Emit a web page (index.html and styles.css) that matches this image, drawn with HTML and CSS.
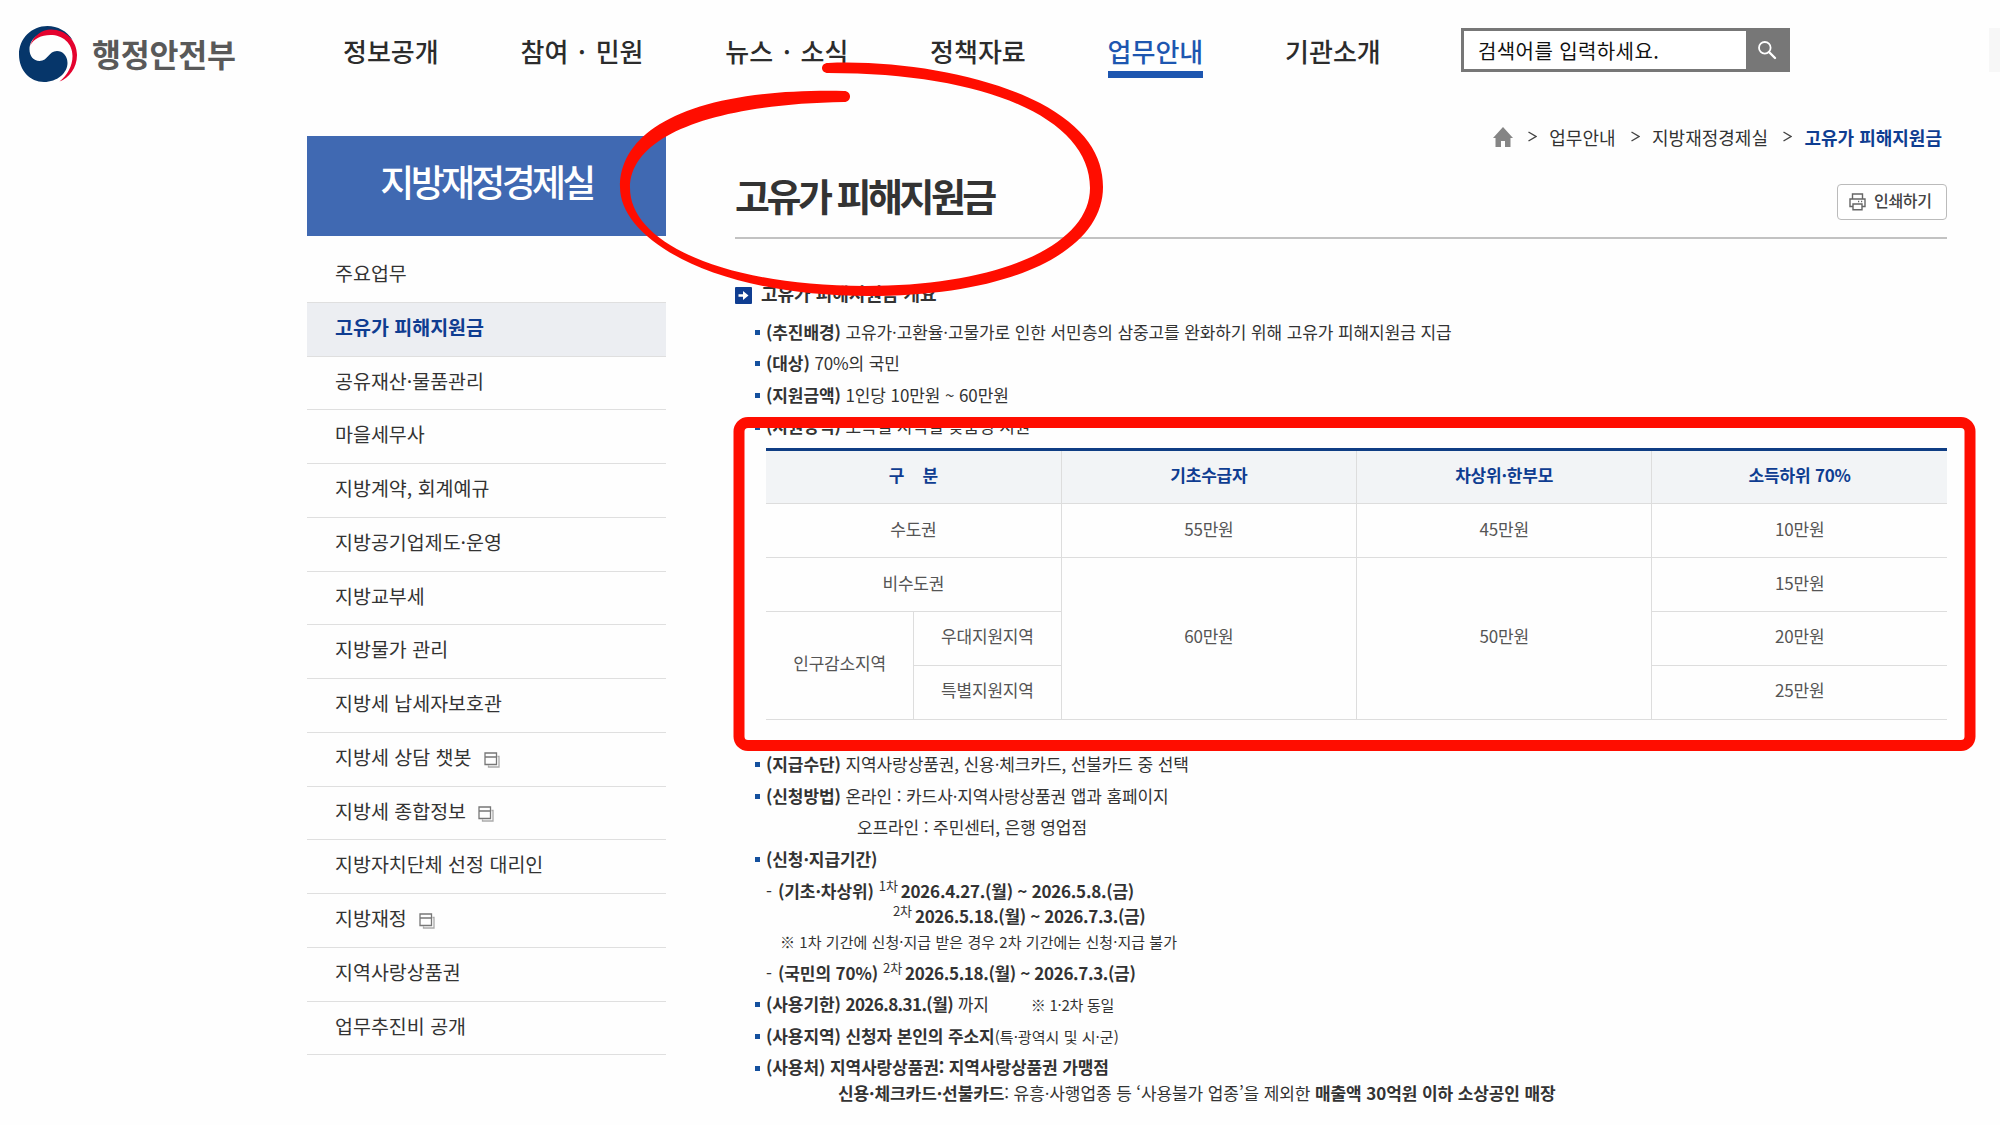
FILE: index.html
```html
<!DOCTYPE html>
<html lang="ko">
<head>
<meta charset="utf-8">
<title>고유가 피해지원금 | 행정안전부</title>
<link rel="stylesheet" href="styles.css">
</head>
<body>
<header class="header">
  <a class="logo">
    <svg class="logo-mark" viewBox="0 0 58 56" width="58" height="56">
      <path fill="#06366a" d="M53.500 14C48 5 38.500 0 28.500 0C12.500 0 0 12.500 0 28.500C0 44.500 11 56 25 56C38 56 48.500 47 48.500 37C48.500 29.500 43.500 25 38 25C29.500 25 29 35 20.500 35C14.500 35 10.500 30 10.500 23.500C10.500 13 20 6 31 6C40 6 48 9 53.500 14Z"/>
      <path fill="#e4032e" d="M11 20C14.500 9 23.500 3.500 32 3.500C47 3.500 58 15 58 29C58 42 50 52 40.500 55.500C48.500 49 53.500 40 53.500 30C53.500 17 43.500 9 31.500 9C22 9 15 12.500 11 20Z"/>
    </svg>
    <span class="logo-text">행정안전부</span>
  </a>
  <nav class="gnb">
    <a class="gnb-item">정보공개</a>
    <a class="gnb-item wide">참여 · 민원</a>
    <a class="gnb-item wide">뉴스 · 소식</a>
    <a class="gnb-item">정책자료</a>
    <a class="gnb-item active">업무안내</a>
    <a class="gnb-item">기관소개</a>
  </nav>
  <div class="search">
    <span class="search-text">검색어를 입력하세요.</span>
    <span class="search-btn">
      <svg width="20" height="20" viewBox="0 0 20 20" fill="none" stroke="#fff"><circle cx="7.800" cy="7.800" r="5.800" stroke-width="1.800"/><path d="M12 12L18 18" stroke-width="2.400" stroke-linecap="round"/></svg>
    </span>
  </div>
  <span class="edge"></span>
</header>

<div class="page">
  <aside class="side">
    <h2 class="side-title">지방재정경제실</h2>
    <ul class="side-menu">
      <li>주요업무</li>
      <li class="current">고유가 피해지원금</li>
      <li>공유재산·물품관리</li>
      <li>마을세무사</li>
      <li>지방계약, 회계예규</li>
      <li>지방공기업제도·운영</li>
      <li>지방교부세</li>
      <li>지방물가 관리</li>
      <li>지방세 납세자보호관</li>
      <li>지방세 상담 챗봇<svg class="ext" viewBox="0 0 16 16"><path d="M13.500 4.500H15V15H4.500V13.500" stroke="#aaa"/><path d="M1 1H12.500V12.500H1ZM1 5H12.500"/></svg></li>
      <li>지방세 종합정보<svg class="ext" viewBox="0 0 16 16"><path d="M13.500 4.500H15V15H4.500V13.500" stroke="#aaa"/><path d="M1 1H12.500V12.500H1ZM1 5H12.500"/></svg></li>
      <li>지방자치단체 선정 대리인</li>
      <li>지방재정<svg class="ext" viewBox="0 0 16 16"><path d="M13.500 4.500H15V15H4.500V13.500" stroke="#aaa"/><path d="M1 1H12.500V12.500H1ZM1 5H12.500"/></svg></li>
      <li>지역사랑상품권</li>
      <li>업무추진비 공개</li>
    </ul>
  </aside>

  <main class="main">
    <div class="crumbs">
      <svg class="home" width="20" height="20" viewBox="0 0 20 20" fill="#858585"><path d="M10 0L20 11H17.500V20H12V14H8V20H2.500V11H0Z"/></svg>
      <svg class="sep" width="9" height="11" viewBox="0 0 9 11"><path d="M.5 1L8 5.500L.5 10"/></svg><span>업무안내</span>
      <svg class="sep" width="9" height="11" viewBox="0 0 9 11"><path d="M.5 1L8 5.500L.5 10"/></svg><span>지방재정경제실</span>
      <svg class="sep" width="9" height="11" viewBox="0 0 9 11"><path d="M.5 1L8 5.500L.5 10"/></svg><b>고유가 피해지원금</b>
    </div>
    <div class="title-row">
      <h1 class="title">고유가 피해지원금</h1>
      <button class="print">
        <svg width="17" height="18" viewBox="0 0 17 18" fill="none" stroke="#666" stroke-width="1.400"><path d="M3.500 6V1H13.500V6M3.500 13.500H1V6H16V13.500H13.500M4 11H13V16.700H4ZM9 8.500H10.200M12 8.500H13.200"/></svg>
        <span>인쇄하기</span>
      </button>
    </div>
    <h3 class="section"><svg width="17" height="17" viewBox="0 0 17 17"><rect width="17" height="17" rx="1" fill="#0f3d91"/><path d="M3.500 7.200H8V4L13.500 8.500L8 13V9.800H3.500Z" fill="#fff"/></svg><span>고유가 피해지원금 개요</span></h3>

    <div class="lines">
      <p class="line dot"><b>(추진배경)</b><span> 고유가·고환율·고물가로 인한 서민층의 삼중고를 완화하기 위해 고유가 피해지원금 지급</span></p>
      <p class="line dot"><b>(대상)</b><span> 70%의 국민</span></p>
      <p class="line dot"><b>(지원금액)</b><span> 1인당 10만원 ~ 60만원</span></p>
      <p class="line dot"><b>(지원방식)</b><span> 소득별·지역별 맞춤형 지원</span></p>
    </div>

    <table class="table">
      <colgroup><col class="c1"><col class="c2"><col class="c3"><col class="c3"><col class="c3"></colgroup>
      <thead>
        <tr><th colspan="2" class="first gap">구 분</th><th>기초수급자</th><th>차상위·한부모</th><th>소득하위 70%</th></tr>
      </thead>
      <tbody>
        <tr><td colspan="2" class="first">수도권</td><td>55만원</td><td>45만원</td><td>10만원</td></tr>
        <tr><td colspan="2" class="first">비수도권</td><td rowspan="3">60만원</td><td rowspan="3">50만원</td><td>15만원</td></tr>
        <tr><td rowspan="2" class="first">인구감소지역</td><td>우대지원지역</td><td>20만원</td></tr>
        <tr><td>특별지원지역</td><td>25만원</td></tr>
      </tbody>
    </table>

    <div class="lines after">
      <p class="line dot"><b>(지급수단)</b><span> 지역사랑상품권, 신용·체크카드, 선불카드 중 선택</span></p>
      <p class="line dot"><b>(신청방법)</b><span> 온라인 : 카드사·지역사랑상품권 앱과 홈페이지</span></p>
      <p class="line in-offline"><span>오프라인 : 주민센터, 은행 영업점</span></p>
      <p class="line dot"><b>(신청·지급기간)</b></p>
      <p class="line"><span class="dash">-</span><b class="who">(기초·차상위)</b><sup>1차</sup><b class="date">2026.4.27.(월) ~ 2026.5.8.(금)</b></p>
      <p class="line tight in-second"><sup>2차</sup><b class="date narrow">2026.5.18.(월) ~ 2026.7.3.(금)</b></p>
      <p class="line tight in-note"><small>※ 1차 기간에 신청·지급 받은 경우 2차 기간에는 신청·지급 불가</small></p>
      <p class="line"><span class="dash">-</span><b class="who">(국민의 70%)</b><sup>2차</sup><b class="date narrow">2026.5.18.(월) ~ 2026.7.3.(금)</b></p>
      <p class="line dot"><b>(사용기한) </b><b class="date limit">2026.8.31.(월)</b><span> 까지</span><small class="same">※ 1·2차 동일</small></p>
      <p class="line dot"><b>(사용지역) 신청자 본인의 주소지</b><small>(특·광역시 및 시·군)</small></p>
      <p class="line dot"><b>(사용처) 지역사랑상품권: 지역사랑상품권 가맹점</b></p>
      <p class="line tight in-card"><b>신용·체크카드·선불카드</b><span>: 유흥·사행업종 등 ‘사용불가 업종’을 제외한 </span><b>매출액 30억원 이하 소상공인 매장</b></p>
    </div>
  </main>
</div>

<svg class="marker" viewBox="0 0 2000 1125" width="2000" height="1125" fill="#ff0d00">
  <path d="M828 63C900 60 985 75 1040 103C1085 127 1103 155 1103 187C1103 250 1015 296 868 296C715 296 620 240 620 187C620 130 690 88 844 91C852 91 852 102 844 102C720 104 630 133 630 188C630 240 715 285 865 286C1000 286 1090 245 1090 188C1090 120 990 73 828 73C820 73 820 63 828 63Z"/>
  <rect x="739" y="422.500" width="1231" height="323" rx="9" fill="none" stroke="#ff0d00" stroke-width="11"/>
</svg>
</body>
</html>
```
FILE: styles.css
```css
* { box-sizing: border-box; margin: 0; padding: 0; }
body {
  width: 2000px; height: 1125px; overflow: hidden; position: relative;
  background: #fefefe; color: #333;
  font-family: "Noto Sans CJK KR", "Noto Sans", sans-serif;
  font-size: 17px; white-space: nowrap;
}
.header { display: flex; height: 106px; padding-left: 19px; }
.logo { display: flex; width: 324px; padding-top: 26px; gap: 15px; }
.logo-text { font-size: 31.5px; font-weight: 700; color: #595959; line-height: 54px; letter-spacing: -.2px; }
.gnb { display: flex; gap: 81.800px; padding-top: 28px; width: 1118px; }
.gnb-item { font-size: 26px; font-weight: 500; line-height: 46px; height: 50px; color: #2c2c2c; }
.gnb-item.wide { word-spacing: 2.500px; }
.gnb-item.active { color: #1d56b0; border-bottom: 7px solid #1d56b0; }
.search { display: flex; width: 329px; height: 44px; margin-top: 28px; border: 3px solid #777; background: #fff; }
.search-text { flex: 1; padding-left: 14px; font-size: 20px; line-height: 40px; letter-spacing: .4px; color: #111; }
.search-btn { width: 41px; background: #777; display: flex; align-items: center; justify-content: center; }
.edge { width: 11px; height: 44px; margin: 28px 0 0 199px; background: #f7f7f7; }

.page { display: flex; padding-left: 307px; gap: 69px; }
.side { width: 359px; padding-top: 30px; }
.side-title { height: 100px; background: #4069b2; color: #fff; font-weight: 500; font-size: 37px; line-height: 90px; letter-spacing: -3.700px; text-align: center; }
.side-menu { list-style: none; padding-top: 13px; }
.side-menu li { height: 53.780px; border-bottom: 1.500px solid #dfdfdf; padding-left: 28px; font-size: 19.500px; line-height: 48px; }
.side-menu .current { background: #eceef2; color: #0f3d91; font-weight: 700; }
.ext { width: 16px; height: 16px; margin-left: 12px; vertical-align: -3px; fill: none; stroke: #777; stroke-width: 1.300; }

.main { width: 1212px; }
.crumbs { display: flex; justify-content: flex-end; align-items: center; height: 61px; font-size: 18px; padding-right: 5px; }
.crumbs b { color: #0f3d91; }
.sep { margin: 0 12.500px 0 15px; fill: none; stroke: #444; stroke-width: 1.400; }
.title-row { display: flex; justify-content: space-between; height: 72px; border-bottom: 2px solid #c2c2c2; }
.title { font-size: 38px; letter-spacing: -3.500px; line-height: 56px; }
.print { display: flex; align-items: center; gap: 8px; width: 110px; height: 36px; margin-top: 17px; padding-left: 11px; border: 1.500px solid #bbb; border-radius: 4px; background: #fff; font: 500 16px "Noto Sans CJK KR", sans-serif; letter-spacing: -.3px; color: #444; }
.print span { padding-bottom: 4px; }
.section { display: flex; align-items: center; gap: 9px; margin-top: 40px; height: 32px; font-size: 18px; }
.section span { padding-bottom: 5px; }

.lines { padding: 1.300px 0 0 31px; letter-spacing: -.1px; }
.lines.after { padding-top: 25px; }
.line { position: relative; height: 31.600px; padding-top: 6.400px; line-height: 25.200px; }
.line.tight { height: 25.200px; padding-top: 0; }
.dot::before { content: ""; position: absolute; left: -11px; top: 17.600px; width: 5px; height: 5px; background: #14509e; }
.line small { font-size: 15px; letter-spacing: .05px; }
.line sup { font-size: 13px; line-height: 0; vertical-align: 7px; margin-right: 3px; }
.dash { display: inline-block; width: 12px; }
.who { margin-right: 5px; }
.date { letter-spacing: -.25px; }
.date.narrow { letter-spacing: -.350px; }
.date.limit { letter-spacing: -.600px; }
.line .same { margin-left: 42px; letter-spacing: -.25px; }
.line.in-offline { padding-left: 91px; }
.line.in-second { padding-left: 127px; }
.line.in-note { padding-left: 14px; }
.line.in-card { padding-left: 72px; }

.table { width: 1181px; margin: 9.700px 0 0 31px; border-collapse: collapse; table-layout: fixed; border-top: 3px solid #0f3d84; }
.c1, .c2 { width: 147.600px; }
.c3 { width: 295.300px; }
.table th, .table td { height: 53.900px; padding-bottom: 5px; border-bottom: 1.500px solid #ddd; border-left: 1.500px solid #ddd; text-align: center; font-size: 17px; letter-spacing: -.2px; color: #555; }
.table .first { border-left: 0; }
.table th { background: #f2f4f6; color: #0f3d91; }
.table .gap { word-spacing: 14px; }
.marker { position: absolute; left: 0; top: 0; }
```
